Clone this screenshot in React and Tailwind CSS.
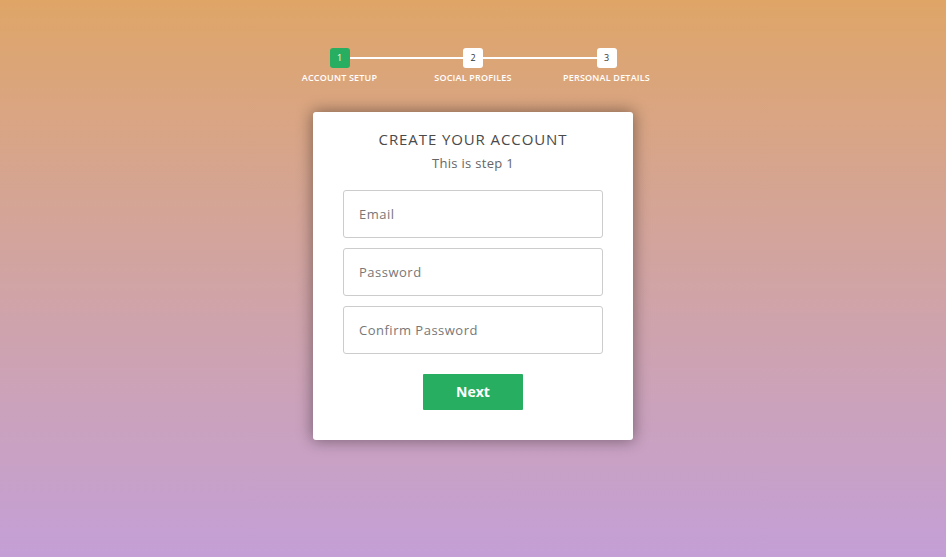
import React, { useState } from 'react';

const steps = ['Account Setup', 'Social Profiles', 'Personal Details'];

export default function App() {
    const [current] = useState(0);

    return (
        <div className="min-h-screen w-full bg-gradient-to-b from-[#dfa567] to-[#c49fd6] font-['Open_Sans',sans-serif]">
            <div className="flex flex-col items-center pt-[48px]">
                {/* progress bar */}
                <div className="relative flex w-[400px] justify-between">
                    <div className="absolute left-[66px] right-[66px] top-[9px] h-[2px] bg-white" />
                    {steps.map((label, i) => (
                        <div key={label} className="relative flex w-[133px] flex-col items-center">
                            <div
                                className={
                                    i === current
                                        ? 'flex h-[20px] w-[20px] items-center justify-center rounded-[3px] bg-[#27ae60] text-[9px] text-white'
                                        : 'flex h-[20px] w-[20px] items-center justify-center rounded-[3px] bg-white text-[9px] text-[#333]'
                                }
                            >
                                {i + 1}
                            </div>
                            <span className="mt-[3px] text-[9px] font-semibold uppercase tracking-[0.2px] text-white whitespace-nowrap">
                                {label}
                            </span>
                        </div>
                    ))}
                </div>

                {/* card */}
                <div className="mt-[27px] flex w-[320px] flex-col items-center rounded-[3px] bg-white px-[30px] pb-[30px] pt-[16px] shadow-[0_0_15px_1px_rgba(0,0,0,0.4)]">
                    <h2 className="text-[15px] uppercase text-[#4a4a4a] tracking-[0.9px]">Create your account</h2>
                    <h3 className="mt-[4px] text-[13px] text-[#666] tracking-[0.3px]">This is step 1</h3>

                    <div className="mt-[16px] flex w-full flex-col gap-[10px]">
                        <input
                            type="text"
                            placeholder="Email"
                            className="h-[48px] w-full rounded-[3px] border border-[#ccc] px-[15px] text-[13px] tracking-[0.5px] text-[#2c3e50] placeholder:text-[#777] outline-none"
                        />
                        <input
                            type="password"
                            placeholder="Password"
                            className="h-[48px] w-full rounded-[3px] border border-[#ccc] px-[15px] text-[13px] tracking-[0.5px] text-[#2c3e50] placeholder:text-[#777] outline-none"
                        />
                        <input
                            type="password"
                            placeholder="Confirm Password"
                            className="h-[48px] w-full rounded-[3px] border border-[#ccc] px-[15px] text-[13px] tracking-[0.5px] text-[#2c3e50] placeholder:text-[#777] outline-none"
                        />
                    </div>

                    <button className="mt-[20px] h-[36px] w-[100px] rounded-[1px] bg-[#27ae60] text-[14px] font-bold text-white">
                        Next
                    </button>
                </div>
            </div>
        </div>
    );
}
